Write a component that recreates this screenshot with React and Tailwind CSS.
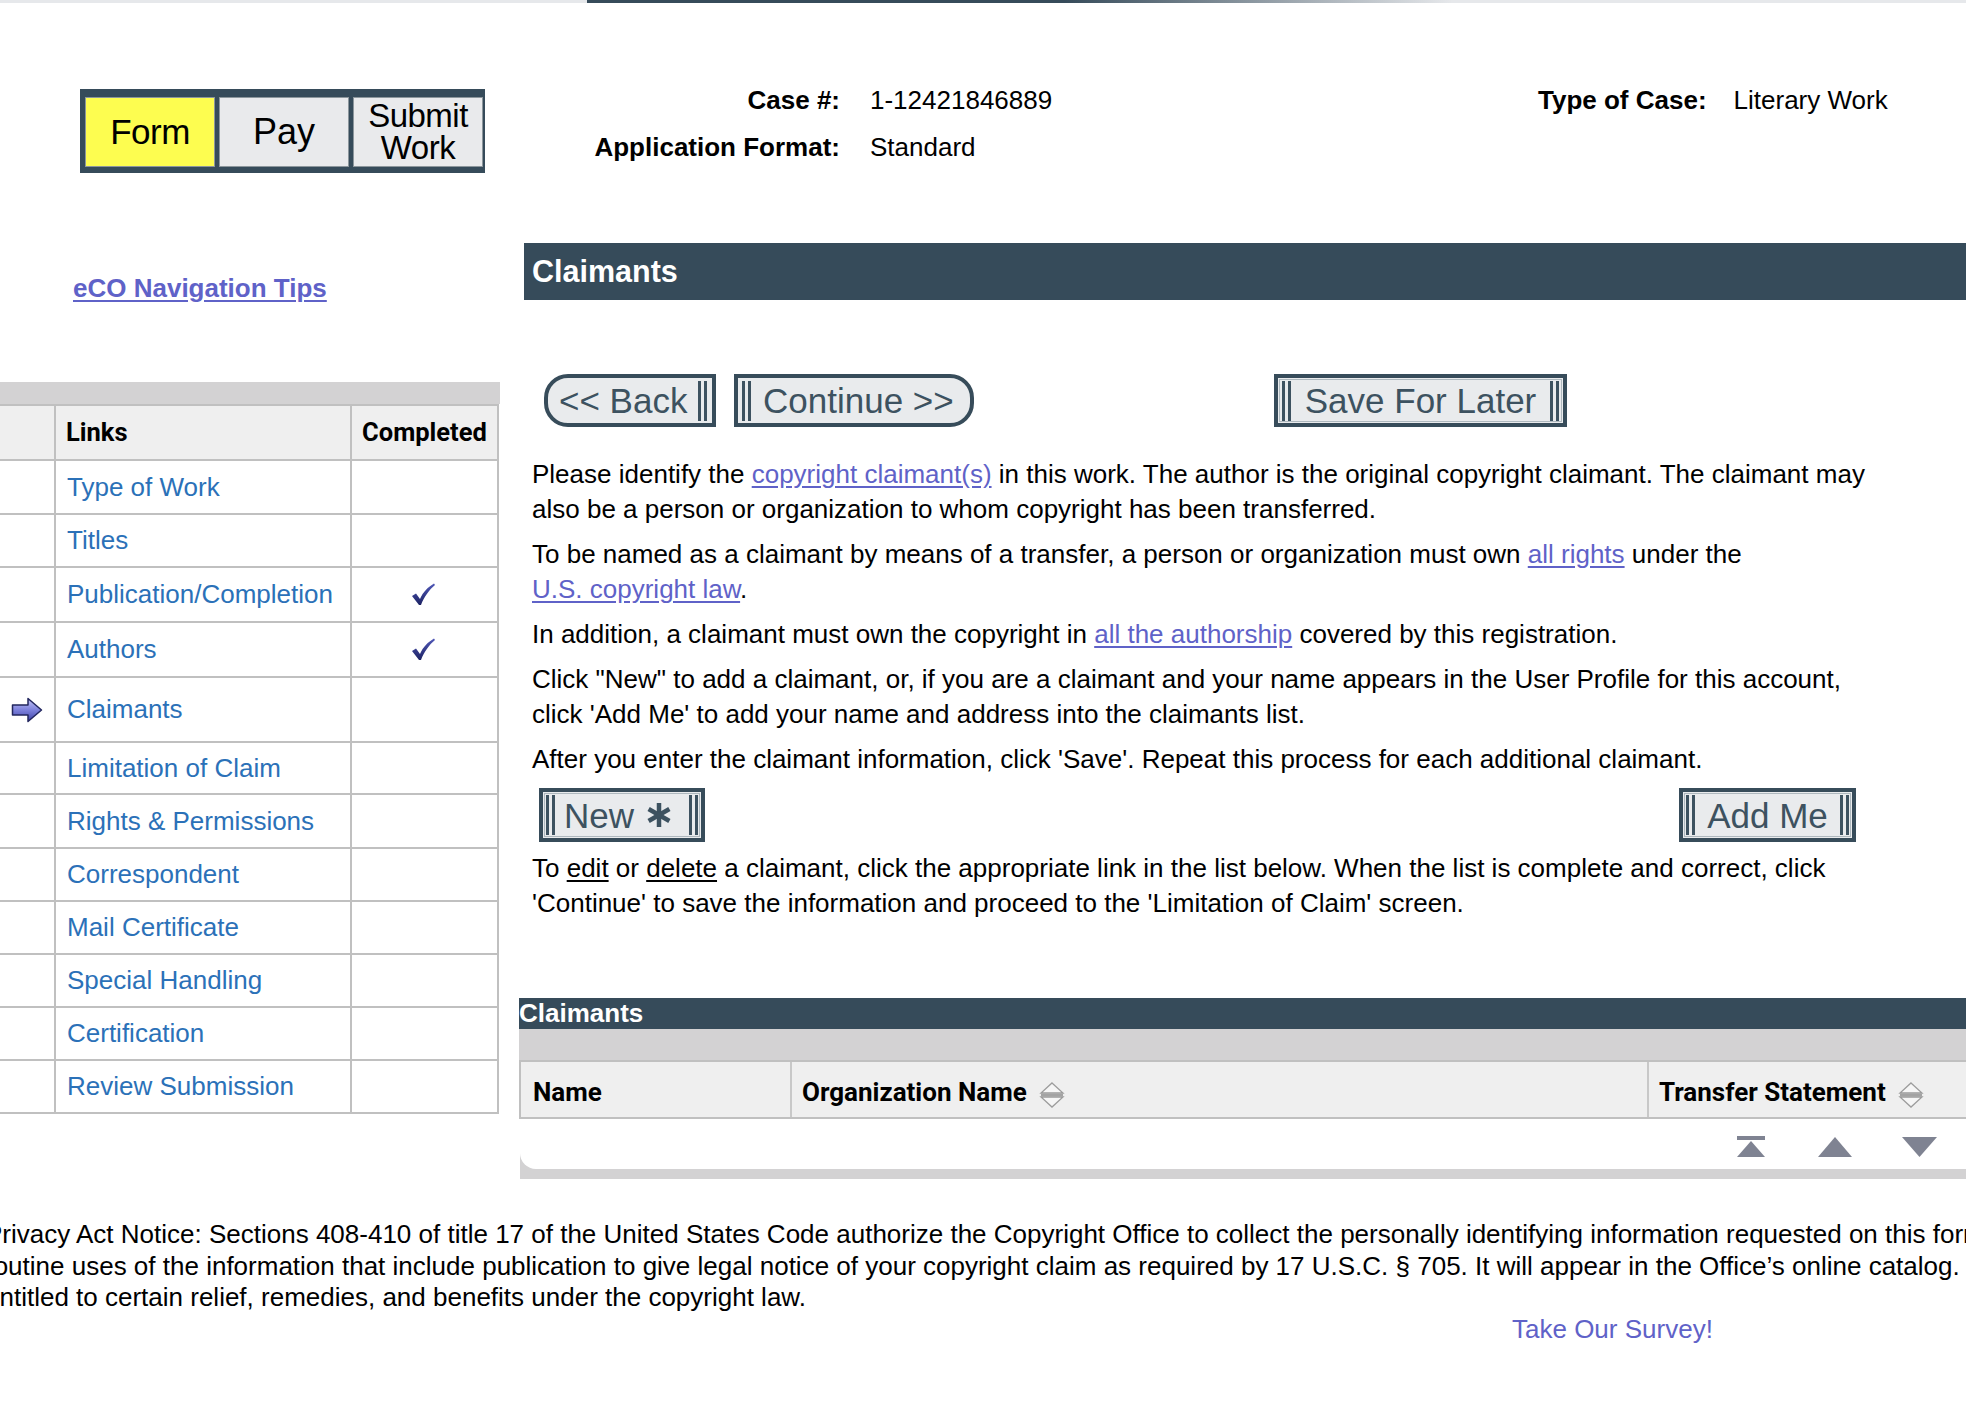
import React from "react"

const links = [
  { title: "Type of Work", h: "h-[54px]" },
  { title: "Titles", h: "h-[53px]" },
  { title: "Publication/Completion", h: "h-[55px]", done: true },
  { title: "Authors", h: "h-[55px]", done: true },
  { title: "Claimants", h: "h-[65px]", current: true },
  { title: "Limitation of Claim", h: "h-[52px]" },
  { title: "Rights & Permissions", h: "h-[54px]" },
  { title: "Correspondent", h: "h-[53px]" },
  { title: "Mail Certificate", h: "h-[53px]" },
  { title: "Special Handling", h: "h-[53px]" },
  { title: "Certification", h: "h-[53px]" },
  { title: "Review Submission", h: "h-[53px]" },
]

function Bars() {
  return (
    <span className="flex h-[40px] gap-[3px] shrink-0">
      <span className="w-[3px] bg-[#3d5260]" />
      <span className="w-[3px] bg-[#3d5260]" />
    </span>
  )
}

function Check() {
  return (
    <svg width="26" height="26" viewBox="0 0 26 26">
      <defs>
        <linearGradient id="ck" x1="0" y1="0" x2="0" y2="1">
          <stop offset="0" stopColor="#5058b8" />
          <stop offset="1" stopColor="#1c2263" />
        </linearGradient>
      </defs>
      <path d="M2 14 L6 11.5 L10 17 C13 10 18 5 24 1.5 L25 3 C19 8 14 15 11 23 L9 23 Z" fill="url(#ck)" />
    </svg>
  )
}

function Arrow() {
  return (
    <svg width="32" height="28" viewBox="0 0 32 28">
      <defs>
        <linearGradient id="ar" x1="0" y1="0" x2="0" y2="1">
          <stop offset="0" stopColor="#c4c6f7" />
          <stop offset="0.5" stopColor="#7d81dc" />
          <stop offset="1" stopColor="#3d42a6" />
        </linearGradient>
      </defs>
      <path d="M1.5 9 H17 V2.5 L30.5 14 L17 25.5 V19 H1.5 Z" fill="url(#ar)" stroke="#22265e" strokeWidth="1.5" strokeLinejoin="round" />
    </svg>
  )
}

function SortIcon() {
  return (
    <svg width="26" height="28" viewBox="0 0 26 28" className="shrink-0 mt-[4px]">
      <path d="M13 2 L24 12 H2 Z" fill="#f6f6f6" stroke="#9c9c9c" strokeWidth="1.3" />
      <rect x="2" y="12.5" width="22" height="3" fill="#a3a3a3" />
      <path d="M2 16 H24 L13 26 Z" fill="#f6f6f6" stroke="#9c9c9c" strokeWidth="1.3" />
    </svg>
  )
}

function Asterisk() {
  return (
    <svg width="26" height="26" viewBox="0 0 26 26" className="shrink-0">
      <g stroke="#3d5260" strokeWidth="4.5" strokeLinecap="butt">
        <line x1="13" y1="1" x2="13" y2="25" />
        <line x1="2.6" y1="7" x2="23.4" y2="19" />
        <line x1="2.6" y1="19" x2="23.4" y2="7" />
      </g>
    </svg>
  )
}

export default function App() {
  return (
    <div className="w-[1966px] h-[1410px] overflow-hidden bg-white text-black font-['Liberation_Sans',Arial,sans-serif]">
      <div className="h-[3px] bg-[linear-gradient(to_right,#e6e8eb_0px,#e6e8eb_587px,#364b5a_587px,#364b5a_1064px,#e6e8eb_1452px,#e6e8eb_100%)]" />

      <div className="flex">
        {/* left column */}
        <aside className="w-[519px] shrink-0">
          <div className="ml-[80px] mt-[86px] flex h-[84px] w-[405px] gap-[4px] bg-[#364b5a] pt-[8px] pb-[6px] pl-[5px] pr-[2px]">
            <div className="flex w-[130px] items-center justify-center border border-[#8c969c] bg-[#fdfd50] text-[35px] tracking-[-0.5px]">Form</div>
            <div className="flex w-[130px] items-center justify-center border border-[#8c969c] bg-[#e9eaec] text-[36px]">Pay</div>
            <div className="flex w-[130px] flex-col items-center justify-center border border-[#8c969c] bg-[#e9eaec] text-[33px] leading-[32px] tracking-[-0.5px]">
              <span>Submit</span>
              <span>Work</span>
            </div>
          </div>

          <a href="#" className="ml-[73px] mt-[98px] block w-fit text-[26px] font-bold leading-[35px] text-[#5f62c8] underline underline-offset-[3px]">
            eCO Navigation Tips
          </a>

          <div className="mt-[76px] w-[500px]">
            <div className="h-[22px] bg-[#d3d2d3]" />
            <div className="flex h-[57px] w-[499px] border-y-2 border-[#c0c0c0] bg-[#efefef] font-[Roboto,sans-serif] text-[25.5px] font-bold">
              <div className="w-[56px] border-r-2 border-[#c0c0c0]" />
              <div className="flex w-[296px] items-center border-r-2 border-[#c0c0c0] pl-[10px]">Links</div>
              <div className="flex w-[147px] items-center justify-center border-r-2 border-[#c0c0c0]">Completed</div>
            </div>
            {links.map((l) => (
              <div key={l.title} className={`flex w-[499px] border-b-2 border-[#c0c0c0] ${l.h}`}>
                <div className="flex w-[56px] items-center pl-[11px] border-r-2 border-[#c0c0c0]">
                  {l.current && <Arrow />}
                </div>
                <div className="flex w-[296px] items-center border-r-2 border-[#c0c0c0] pl-[11px]">
                  <a href="#" className="text-[26px] text-[#2b71b8]">{l.title}</a>
                </div>
                <div className="flex w-[147px] items-center justify-center border-r-2 border-[#c0c0c0] pr-[3px]">
                  {l.done && <Check />}
                </div>
              </div>
            ))}
          </div>
        </aside>

        {/* main column */}
        <main className="w-[1447px] shrink-0">
          <div className="mt-[80px] flex text-[26px] leading-[35px]">
            <div className="grid w-[1019px] shrink-0 grid-cols-[321px_auto] gap-x-[30px] gap-y-[12px]">
              <span className="text-right font-bold">Case #:</span>
              <span>1-12421846889</span>
              <span className="text-right font-bold">Application Format:</span>
              <span>Standard</span>
            </div>
            <div className="flex gap-[27px]">
              <span className="font-bold">Type of Case:</span>
              <span>Literary Work</span>
            </div>
          </div>

          <div className="ml-[5px] mt-[78px] flex h-[57px] items-center bg-[#364b5a] pl-[8px] text-[30.5px] font-bold text-white">
            Claimants
          </div>

          <div className="mt-[74px] flex h-[53px] text-[35px] leading-none text-[#3d5260]">
            <button className="ml-[25px] flex w-[172px] items-center rounded-l-[24px] border-[4px] border-[#374c5a] bg-[#e9ebed] pl-[11px] pr-[5px]">
              <span className="flex-1 text-left">&lt;&lt; Back</span>
              <Bars />
            </button>
            <button className="ml-[18px] flex w-[240px] items-center rounded-r-[24px] border-[4px] border-[#374c5a] bg-[#e9ebed] pl-[4px]">
              <Bars />
              <span className="ml-[12px]">Continue &gt;&gt;</span>
            </button>
            <button className="ml-[300px] flex w-[293px] items-center justify-between border-[4px] border-[#374c5a] bg-[#e9ebed] px-[4px] shadow-[inset_0_0_0_1px_#e9ebed,inset_0_0_0_2px_#aeb8be]">
              <Bars />
              <span>Save For Later</span>
              <Bars />
            </button>
          </div>

          <div className="ml-[13px] mt-[30px] w-[1352px] text-[26px] leading-[35px]">
            <p>
              Please identify the <a href="#" className="whitespace-nowrap text-[#5f62c8] underline underline-offset-[3px]">copyright claimant(s)</a> in this work. The author is the original copyright claimant. The claimant may also be a person or organization to whom copyright has been transferred.
            </p>
            <p className="mt-[10px]">
              To be named as a claimant by means of a transfer, a person or organization must own <a href="#" className="whitespace-nowrap text-[#5f62c8] underline underline-offset-[3px]">all rights</a> under the <a href="#" className="whitespace-nowrap text-[#5f62c8] underline underline-offset-[3px]">U.S. copyright law</a>.
            </p>
            <p className="mt-[10px]">
              In addition, a claimant must own the copyright in <a href="#" className="whitespace-nowrap text-[#5f62c8] underline underline-offset-[3px]">all the authorship</a> covered by this registration.
            </p>
            <p className="mt-[10px]">
              Click "New" to add a claimant, or, if you are a claimant and your name appears in the User Profile for this account, click 'Add Me' to add your name and address into the claimants list.
            </p>
            <p className="mt-[10px]">
              After you enter the claimant information, click 'Save'. Repeat this process for each additional claimant.
            </p>
          </div>

          <div className="ml-[20px] mt-[11px] flex h-[54px] w-[1317px] justify-between text-[35px] leading-none text-[#3d5260]">
            <button className="flex w-[166px] items-center border-[4px] border-[#374c5a] bg-[#e9ebed] px-[3px] shadow-[inset_0_0_0_1px_#e9ebed,inset_0_0_0_2px_#aeb8be]">
              <Bars />
              <span className="ml-[9px]">New</span>
              <span className="ml-[12px]"><Asterisk /></span>
              <span className="ml-auto"><Bars /></span>
            </button>
            <button className="flex w-[177px] items-center justify-between border-[4px] border-[#374c5a] bg-[#e9ebed] px-[3px] shadow-[inset_0_0_0_1px_#e9ebed,inset_0_0_0_2px_#aeb8be]">
              <Bars />
              <span>Add Me</span>
              <Bars />
            </button>
          </div>

          <p className="ml-[13px] mt-[9px] w-[1352px] text-[26px] leading-[35px]">
            To <a href="#" className="underline underline-offset-[3px]">edit</a> or <a href="#" className="underline underline-offset-[3px]">delete</a> a claimant, click the appropriate link in the list below. When the list is complete and correct, click 'Continue' to save the information and proceed to the 'Limitation of Claim' screen.
          </p>

          <div className="mt-[77px]">
            <div className="flex h-[31px] items-center bg-[#364b5a] text-[26px] font-bold text-white">Claimants</div>
            <div className="h-[31px] bg-[#d3d2d3]" />
            <div className="flex h-[59px] border-y-2 border-l-2 border-[#c0c0c0] bg-[#efefef] font-[Roboto,sans-serif] text-[26px] font-bold">
              <div className="flex w-[271px] items-center border-r-2 border-[#c8c8c8] pl-[12px] pt-[6px]">Name</div>
              <div className="flex w-[857px] items-center gap-[12px] border-r-2 border-[#c8c8c8] pl-[10px] pt-[6px]">
                Organization Name <SortIcon />
              </div>
              <div className="flex flex-1 items-center gap-[12px] pl-[10px] pt-[6px]">
                Transfer Statement <SortIcon />
              </div>
            </div>
            <div className="ml-[1px] bg-[#d3d2d3] pb-[10px]">
              <div className="flex h-[50px] items-center justify-end gap-[50px] rounded-bl-[16px] bg-white pr-[29px] pt-[6px]">
                <svg width="34" height="22" viewBox="0 0 34 22">
                  <rect x="3" y="0" width="28" height="4" fill="#7f8392" />
                  <path d="M17 5 L31 21 H3 Z" fill="#7f8392" />
                </svg>
                <svg width="34" height="20" viewBox="0 0 34 20">
                  <path d="M17 0 L34 20 H0 Z" fill="#7f8392" />
                </svg>
                <svg width="35" height="20" viewBox="0 0 35 20">
                  <path d="M0 0 H35 L17.5 20 Z" fill="#7f8392" />
                </svg>
              </div>
            </div>
          </div>
        </main>
      </div>

      <div className="-ml-[15px] mt-[40px] whitespace-nowrap text-[26px] leading-[31.5px]">
        Privacy Act Notice: Sections 408-410 of title 17 of the United States Code authorize the Copyright Office to collect the personally identifying information requested on this form in order to process the application for copyright registration. By providing this information you are agreeing to
        <br />
        routine uses of the information that include publication to give legal notice of your copyright claim as required by 17 U.S.C. § 705. It will appear in the Office’s online catalog. If you do not provide the information requested, registration may be refused or delayed, and you may not be
        <br />
        entitled to certain relief, remedies, and benefits under the copyright law.
      </div>
      <a href="#" className="ml-[1512px] block w-fit text-[26px] leading-[31.5px] text-[#5f62c8]">Take Our Survey!</a>
    </div>
  )
}
